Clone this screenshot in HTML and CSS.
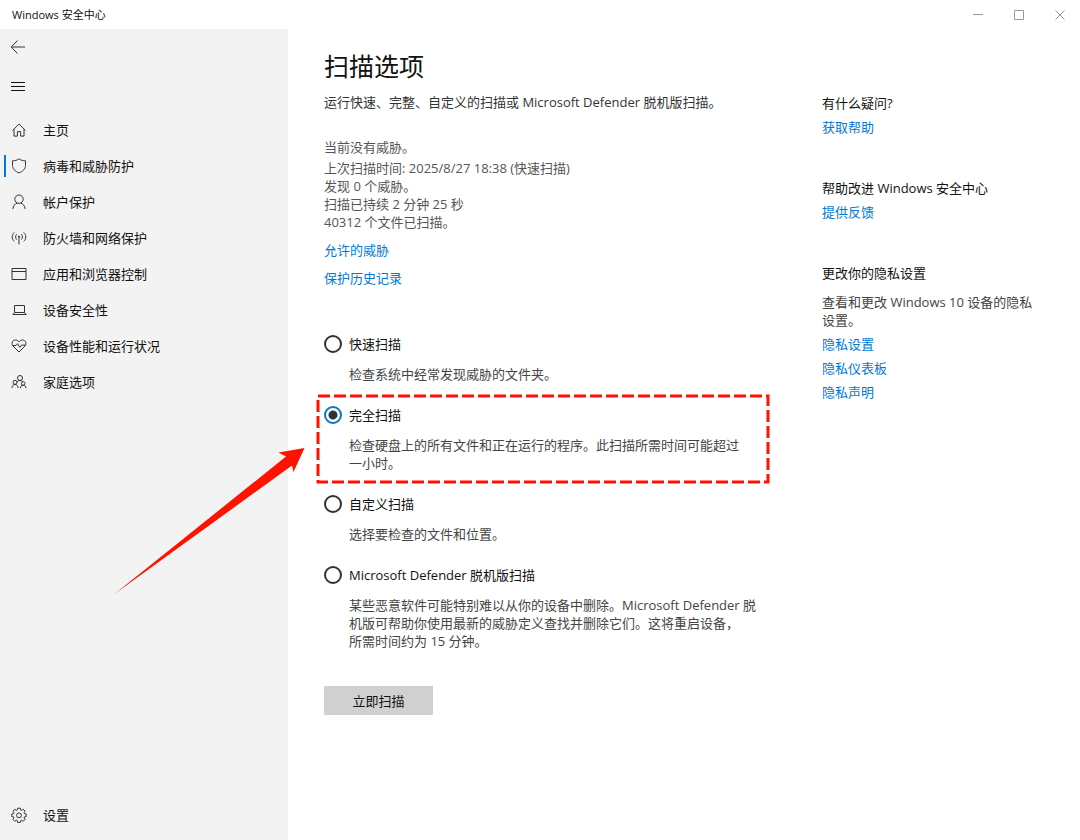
FILE: index.html
```html
<!DOCTYPE html>
<html lang="zh-CN">
<head>
  <meta charset="UTF-8">
  <meta name="viewport" content="width=device-width, initial-scale=1.0">
  <title>Windows 安全中心</title>
  <link rel="stylesheet" href="styles.css">
</head>
<body>
  <header class="titlebar">
    <span class="titlebar-text">Windows 安全中心</span>
    <div class="window-buttons">
      <button type="button" aria-label="最小化">
        <svg width="12" height="12" viewBox="0 0 12 12"><path d="M1 5.500h10"/></svg>
      </button>
      <button type="button" aria-label="最大化">
        <svg width="12" height="12" viewBox="0 0 12 12"><path d="M1.5 1.5h9v9h-9z"/></svg>
      </button>
      <button type="button" aria-label="关闭">
        <svg width="12" height="12" viewBox="0 0 12 12"><path d="M1.5 1.5l9 9M10.5 1.5l-9 9"/></svg>
      </button>
    </div>
  </header>

  <div class="window">
    <aside class="sidebar">
      <button type="button" class="icon-button" aria-label="返回">
        <svg class="icon" viewBox="0 0 16 16"><path d="M15 8H1.5M7.5 1.5L1.2 8l6.3 6.5"/></svg>
      </button>
      <button type="button" class="icon-button" aria-label="导航">
        <svg class="icon icon-dark" viewBox="0 0 16 16"><path d="M1 3.5h14M1 7.5h14M1 11.5h14"/></svg>
      </button>

      <nav class="nav">
        <a href="#" class="nav-item">
          <svg class="icon" viewBox="0 0 16 16"><path d="M1.6 8.4L8 2l6.4 6.4M3 7.2v6.9h3.4V9.6h3.2v4.5H13V7.2"/></svg>
          主页
        </a>
        <a href="#" class="nav-item active">
          <svg class="icon" viewBox="0 0 16 16"><path d="M8 .8c2 1.500 4 2 6.500 2v4.500c0 3.500-2.500 6-6.500 7.700-4-1.700-6.500-4.200-6.500-7.700V2.800C4 2.800 6 2.300 8 .8z"/></svg>
          病毒和威胁防护
        </a>
        <a href="#" class="nav-item">
          <svg class="icon" viewBox="0 0 16 16"><circle cx="8" cy="5.2" r="4.2"/><path d="M1.800 15c.3-3 1.900-5 4.300-5.900M14.200 15c-.3-3-1.900-5-4.300-5.900"/></svg>
          帐户保护
        </a>
        <a href="#" class="nav-item">
          <svg class="icon" viewBox="0 0 16 16"><path d="M8 6v8.500M5.600 4.200c-1.300 1.600-1.300 3.800 0 5.400M10.400 4.200c1.300 1.600 1.300 3.800 0 5.400M3.300 2.400c-2.800 2.600-2.800 6.400 0 9M12.700 2.400c2.800 2.600 2.800 6.400 0 9"/><circle cx="8" cy="6.500" r=".6"/></svg>
          防火墙和网络保护
        </a>
        <a href="#" class="nav-item">
          <svg class="icon" viewBox="0 0 16 16"><path d="M1 2.500h14v11H1zM1 5.500h14"/></svg>
          应用和浏览器控制
        </a>
        <a href="#" class="nav-item">
          <svg class="icon" viewBox="0 0 16 16"><path d="M3.500 3.500h10v7h-10zM3.500 10.500l-1.700 2h13.400l-1.700-2"/></svg>
          设备安全性
        </a>
        <a href="#" class="nav-item">
          <svg class="icon" viewBox="0 0 16 16"><path d="M8 14L2 8C.2 6 1 2 4.400 2 6.300 2 7.300 3 8 4c.7-1 1.700-2 3.600-2C15 2 15.800 6 14 8zM2 7.500h3l1.500-1.800 2.300 3.600 1.700-2.200h3.700"/></svg>
          设备性能和运行状况
        </a>
        <a href="#" class="nav-item">
          <svg class="icon" viewBox="0 0 16 16"><circle cx="9" cy="4" r="2.500"/><circle cx="4" cy="8.300" r="2"/><circle cx="12.200" cy="9.500" r="1.800"/><path d="M1 14c0-2.300 1.200-3.600 3-3.600S7 11.700 7 14M9.400 14.200c0-2 1.100-2.900 2.800-2.900s2.800 1 2.800 2.900M6 8.500c.3-1.300 1.400-2 3-2 1.300 0 2.300.5 2.800 1.200"/></svg>
          家庭选项
        </a>
      </nav>

      <a href="#" class="nav-item nav-settings">
        <svg class="icon" viewBox="0 0 16 16"><path d="M6.600 1.200h2.800l.3 1.800 1 .4 1.500-1.100 1.900 1.900L13 5.700l.4 1 1.800.3v2.600l-1.800.3-.4 1 1.100 1.500-1.900 1.900-1.500-1.100-1 .4-.3 1.800H6.600l-.3-1.800-1-.4-1.500 1.100-1.900-1.900L3 10.900l-.4-1-1.800-.3V7l1.800-.3.4-1-1.100-1.500 1.900-1.900 1.500 1.100 1-.4z"/><circle cx="8" cy="8.300" r="2.400"/></svg>
        设置
      </a>
    </aside>

    <main class="main">
      <form class="content">
        <h1>扫描选项</h1>
        <p class="intro">运行快速、完整、自定义的扫描或 Microsoft Defender 脱机版扫描。</p>

        <div class="status">
          <p class="status-title">当前没有威胁。</p>
          <p>上次扫描时间: 2025/8/27 18:38 (快速扫描)</p>
          <p>发现 0 个威胁。</p>
          <p>扫描已持续 2 分钟 25 秒</p>
          <p>40312 个文件已扫描。</p>
        </div>

        <div class="status-links">
          <a href="#">允许的威胁</a>
          <a href="#">保护历史记录</a>
        </div>

        <div class="options">
          <div class="option">
            <input type="radio" name="scan" id="quick">
            <label for="quick">快速扫描</label>
            <p>检查系统中经常发现威胁的文件夹。</p>
          </div>
          <div class="option">
            <input type="radio" name="scan" id="full" checked>
            <label for="full">完全扫描</label>
            <p>检查硬盘上的所有文件和正在运行的程序。此扫描所需时间可能超过<br>一小时。</p>
            <svg class="highlight"><rect x="2" y="2"/></svg>
            <svg class="arrow" viewBox="0 0 192 148"><path d="M190.500 1L164.500 5.500l7.500 4L.5 147 178 18.500l1.500 6.500z"/></svg>
          </div>
          <div class="option">
            <input type="radio" name="scan" id="custom">
            <label for="custom">自定义扫描</label>
            <p>选择要检查的文件和位置。</p>
          </div>
          <div class="option">
            <input type="radio" name="scan" id="offline">
            <label for="offline">Microsoft Defender 脱机版扫描</label>
            <p>某些恶意软件可能特别难以从你的设备中删除。Microsoft Defender 脱<br>机版可帮助你使用最新的威胁定义查找并删除它们。这将重启设备，<br>所需时间约为 15 分钟。</p>
          </div>
        </div>

        <button type="button" class="scan-button">立即扫描</button>
      </form>

      <aside class="help">
        <section>
          <h2>有什么疑问?</h2>
          <a href="#">获取帮助</a>
        </section>
        <section>
          <h2>帮助改进 Windows 安全中心</h2>
          <a href="#">提供反馈</a>
        </section>
        <section>
          <h2>更改你的隐私设置</h2>
          <p>查看和更改 Windows 10 设备的隐私<br>设置。</p>
          <a href="#">隐私设置</a>
          <a href="#">隐私仪表板</a>
          <a href="#">隐私声明</a>
        </section>
      </aside>
    </main>
  </div>
</body>
</html>
```

FILE: styles.css
```css
* {
  box-sizing: border-box;
}
body {
  margin: 0;
  min-height: 100vh;
  display: flex;
  flex-direction: column;
  font-family: "Open Sans", "Noto Sans CJK SC", sans-serif;
  font-size: 13px;
  line-height: 18px;
  color: #111;
  background-color: #fff;
}
h1, h2, p {
  margin: 0;
  font-weight: normal;
}
a {
  color: #0078d7;
  text-decoration: none;
}
button {
  font: inherit;
  color: inherit;
  border: none;
  cursor: pointer;
}
svg {
  fill: none;
}

/* title bar */
.titlebar {
  display: flex;
  justify-content: space-between;
  align-items: center;
  height: 29px;
  padding-left: 12px;
}
.titlebar-text {
  font-size: 11px;
}
.window-buttons {
  display: flex;
}
.window-buttons button {
  display: flex;
  align-items: center;
  justify-content: center;
  width: 41px;
  height: 29px;
  padding: 0;
  background: none;
}
.window-buttons svg {
  stroke: #999;
}

/* sidebar */
.window {
  flex: 1;
  display: flex;
}
.sidebar {
  flex: 0 0 288px;
  display: flex;
  flex-direction: column;
  padding-bottom: 7px;
  background-color: #f3f3f3;
}
.icon {
  flex: none;
  width: 16px;
  height: 16px;
  stroke: #333;
}
.icon-dark {
  stroke: #111;
}
.icon-button {
  display: flex;
  align-items: center;
  width: 40px;
  height: 36px;
  margin-bottom: 4px;
  padding: 0 10px;
  background: none;
}
.nav {
  flex: 1;
  padding-top: 3px;
}
.nav-item {
  display: flex;
  align-items: center;
  gap: 16px;
  height: 36px;
  padding-left: 11px;
  color: #111;
}
.nav-item.active {
  padding-left: 4px;
}
.nav-item.active::before {
  content: "";
  width: 2px;
  height: 22px;
  margin-right: -11px;
  background-color: #0078d7;
}

/* main area */
.main {
  flex: 1;
  display: flex;
  gap: 48px;
  padding: 19px 36px;
}
.content {
  flex: 0 0 450px;
}
h1 {
  font-size: 25px;
  line-height: 36px;
}
.intro {
  margin-top: 9px;
  color: #333;
}
.status {
  margin-top: 27px;
  color: #555;
}
.status-title {
  margin-bottom: 3px;
}
.status-links {
  display: flex;
  flex-direction: column;
  align-items: flex-start;
  gap: 10px;
  margin-top: 10px;
}
.options {
  display: flex;
  flex-direction: column;
  gap: 23px;
  margin-top: 48px;
}
.option {
  position: relative;
  display: grid;
  grid-template-columns: 18px 1fr;
  gap: 12px 7px;
}
.option input {
  appearance: none;
  width: 18px;
  height: 18px;
  margin: 0;
  border: 2px solid #333;
  border-radius: 50%;
}
.option input:checked {
  border-color: #0078d7;
  background: radial-gradient(circle, #333 4px, transparent 5px);
}
.option p {
  grid-column: 2;
  color: #444;
  white-space: nowrap;
}

/* red marks over the selected option */
.highlight {
  position: absolute;
  top: -12px;
  left: -8px;
  width: calc(100% + 4px);
  height: calc(100% + 24px);
}
.highlight rect {
  width: calc(100% - 4px);
  height: calc(100% - 4px);
  stroke: #ff1200;
  stroke-width: 3;
  stroke-dasharray: 12 4;
}
.arrow {
  position: absolute;
  top: 41px;
  left: -210px;
  width: 192px;
  height: 148px;
  fill: #ff1200;
}
.highlight, .arrow {
  pointer-events: none;
}

.scan-button {
  width: 109px;
  height: 29px;
  margin-top: 36px;
  padding: 0;
  background-color: #d0d0d0;
}

/* help column */
.help {
  flex: 1;
  display: flex;
  flex-direction: column;
  gap: 43px;
  padding-top: 46px;
}
.help section {
  display: flex;
  flex-direction: column;
  align-items: flex-start;
  gap: 6px;
}
.help h2 {
  font-size: 13px;
  line-height: 18px;
}
.help p {
  margin-top: 5px;
  color: #444;
  white-space: nowrap;
}
```
